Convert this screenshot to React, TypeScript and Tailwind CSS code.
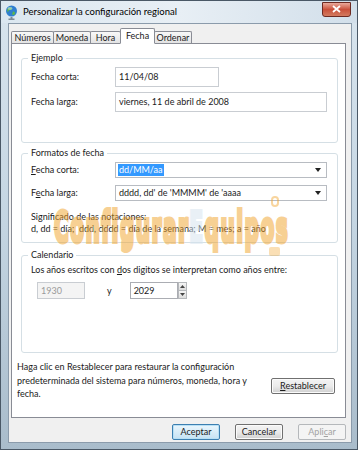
import React from "react";

const font = "font-['Lato',sans-serif]";

const Tab = ({ label, w, active }: { label: string; w: string; active?: boolean }) => (
  <div
    className={`${w} flex items-center justify-center border border-[#898c95] rounded-t-[2px] ${
      active
        ? "h-[16px] -mb-px bg-white border-b-white z-10"
        : "h-[12px] bg-gradient-to-b from-[#f8f8f8] to-[#e3e3e3] border-b-0"
    } -ml-px first:ml-0`}
  >
    {label}
  </div>
);

const Combo = ({ children }: { children: React.ReactNode }) => (
  <div className="w-[212px] h-[16px] border border-[#b8bcc2] bg-white flex items-center pl-[2px] pr-[5px]">
    <div className="flex-1 flex items-center">{children}</div>
    <svg width="6" height="4" viewBox="0 0 6 4">
      <path d="M0 0h6L3 4z" fill="#222" />
    </svg>
  </div>
);

const Btn = ({
  children,
  w = "w-[48px]",
  variant,
}: {
  children: React.ReactNode;
  w?: string;
  variant?: "default" | "disabled";
}) => (
  <div
    className={`${w} h-[16px] rounded-[2px] flex items-center justify-center ${
      variant === "default"
        ? "border border-[#3c7fb1] bg-gradient-to-b from-[#eaf6fd] to-[#c6e2f3] shadow-[0_0_0_1px_#b8e0f5_inset]"
        : variant === "disabled"
        ? "border border-[#b5b8bb] bg-[#f4f4f4] text-[#a3a3a3]"
        : "border border-[#707070] bg-gradient-to-b from-[#f3f3f3] via-[#ebebeb] to-[#cfcfcf] shadow-[0_0_0_1px_#fbfbfb_inset]"
    }`}
  >
    {children}
  </div>
);

const Globe = () => (
  <svg width="13" height="15" viewBox="0 0 13 15">
    <circle cx="6.5" cy="6" r="5.5" fill="#2e7fd0" />
    <path d="M3 3c1.5-1 3-1 4 0 .5 1-1 2-2 2S3 6 3 7.5C2 6.5 2 4 3 3z" fill="#5cb84a" />
    <path d="M8 6.5c1 0 2 .5 2 1.5s-1 2-2 2-1-1.5 0-3.5z" fill="#5cb84a" />
    <ellipse cx="5" cy="3.5" rx="2.5" ry="1.4" fill="#cfe8ff" opacity=".5" />
    <path d="M5.5 12h2v1.5h2V15h-6v-1.5h2z" fill="#7b8a96" />
  </svg>
);

const wmShadow =
  "[text-shadow:2px_0_#fff,-2px_0_#fff,0_2px_#fff,0_-2px_#fff,2px_2px_#fff,-2px_-2px_#fff,2px_-2px_#fff,-2px_2px_#fff]";

export default function App() {
  return (
    <div
      className={`${font} relative w-[358px] h-[450px] overflow-hidden text-[9px] leading-[12px] text-[#1b1b1b] border border-[#4a5866] bg-gradient-to-b from-[#d9e5ee] via-[#c4d5e2] to-[#a9bccb]`}
    >
      {/* title bar */}
      <div className="h-[22px] flex items-center pl-[4px] bg-gradient-to-r from-[#dbe7f0] via-[#e8eff5] to-[#d2dfea]">
        <Globe />
        <span className="ml-[5px] text-[9.5px] text-black">Personalizar la configuración regional</span>
        <div className="ml-auto mr-[6px] -mt-[6px] w-[29px] h-[15px] rounded-b-[3px] border border-[#6d2a22] bg-gradient-to-b from-[#e9a99b] via-[#c9503b] to-[#d27a5f] flex items-center justify-center">
          <svg width="9" height="8" viewBox="0 0 9 8">
            <path d="M1 1l7 6M8 1L1 7" stroke="#fff" strokeWidth="1.8" />
          </svg>
        </div>
      </div>

      {/* client area */}
      <div className="ml-[7px] mr-[5px] h-[420px] border border-[#8b9bab] bg-[#f0f0f0] pt-[3px] pl-[2px] pr-[5px]">
        <div className="flex items-end h-[16px]">
          <Tab label="Números" w="w-[43px]" />
          <Tab label="Moneda" w="w-[38px]" />
          <Tab label="Hora" w="w-[31px]" />
          <Tab label="Fecha" w="w-[35px]" active />
          <Tab label="Ordenar" w="w-[38px]" />
        </div>

        <div className="relative h-[375px] border border-[#898c95] bg-white pt-[8px] pl-[9px] pr-[7px]">
          {/* Ejemplo */}
          <fieldset className="h-[91px] border border-[#d5dfe5] rounded-[3px] pl-[9px]">
            <legend className="ml-[-3px] px-[3px] leading-[12px]">Ejemplo</legend>
            <div className="pt-[3px] flex flex-col gap-[5px]">
              <div className="flex items-center">
                <span className="w-[84px]">Fecha corta:</span>
                <div className="w-[104px] h-[20px] border border-[#c9cdd2] bg-white flex items-center pl-[3px]">11/04/08</div>
              </div>
              <div className="flex items-center">
                <span className="w-[84px]">Fecha larga:</span>
                <div className="w-[212px] h-[20px] border border-[#c9cdd2] bg-white flex items-center pl-[3px]">
                  viernes, 11 de abril de 2008
                </div>
              </div>
            </div>
          </fieldset>

          {/* Formatos de fecha */}
          <fieldset className="mt-[4px] h-[96px] border border-[#d5dfe5] rounded-[3px] pl-[9px]">
            <legend className="ml-[-3px] px-[3px] leading-[12px]">Formatos de fecha</legend>
            <div className="pt-[3px] flex flex-col gap-[7px]">
              <div className="flex items-center">
                <span className="w-[84px]">
                  <u>F</u>echa corta:
                </span>
                <Combo>
                  <span className="bg-[#3399ff] text-white px-[1px] leading-[12px]">dd/MM/aa</span>
                </Combo>
              </div>
              <div className="flex items-center">
                <span className="w-[84px]">
                  F<u>e</u>cha larga:
                </span>
                <Combo>
                  <span className="px-[1px]">dddd, dd' de 'MMMM' de 'aaaa</span>
                </Combo>
              </div>
            </div>
            <div className="mt-[10px]">
              <div>Significado de las notaciones:</div>
              <div className="whitespace-pre">d, dd = día;  ddd, dddd = día de la semana; M = mes; a = año</div>
            </div>
          </fieldset>

          {/* Calendario */}
          <fieldset className="mt-[6px] h-[104px] border border-[#d5dfe5] rounded-[3px] pl-[9px]">
            <legend className="ml-[-3px] px-[3px] leading-[12px]">Calendario</legend>
            <div className="pt-[3px]">
              Los años escritos con <u>d</u>os digitos se interpretan como años entre:
            </div>
            <div className="mt-[6px] flex items-center pl-[6px]">
              <div className="w-[48px] h-[17px] border border-[#c9cdd2] bg-[#f4f4f4] text-[#9a9a9a] flex items-center pl-[3px]">
                1930
              </div>
              <span className="ml-[22px]">y</span>
              <div className="ml-[18px] flex">
                <div className="w-[48px] h-[17px] border border-[#abadb3] bg-white flex items-center pl-[3px]">2029</div>
                <div className="w-[9px] h-[17px] flex flex-col">
                  <div className="flex-1 border border-[#b5b8bb] bg-gradient-to-b from-[#f6f6f6] to-[#dcdcdc] flex items-center justify-center">
                    <svg width="5" height="3" viewBox="0 0 5 3"><path d="M0 3L2.5 0 5 3z" fill="#444" /></svg>
                  </div>
                  <div className="flex-1 border border-t-0 border-[#b5b8bb] bg-gradient-to-b from-[#f6f6f6] to-[#dcdcdc] flex items-center justify-center">
                    <svg width="5" height="3" viewBox="0 0 5 3"><path d="M0 0h5L2.5 3z" fill="#444" /></svg>
                  </div>
                </div>
              </div>
            </div>
          </fieldset>

          {/* Restablecer */}
          <div className="-ml-[4px] mt-[7px] flex">
            <div className="w-[245px] leading-[13.5px]">
              Haga clic en Restablecer para restaurar la configuración predeterminada del sistema para números, moneda, hora y fecha.
            </div>
            <div className="ml-auto mr-[3px] mt-[18px]">
              <Btn w="w-[64px]">
                <span>
                  <u>R</u>establecer
                </span>
              </Btn>
            </div>
          </div>

          {/* watermark */}
          <div
            className={`absolute left-[42px] top-[163px] pointer-events-none opacity-50 whitespace-nowrap font-['DejaVu_Sans',sans-serif] font-bold text-[42px] leading-[42px] tracking-[3px] [transform:scaleX(0.48)] origin-left ${wmShadow}`}
          >
            <span className="text-[#f0a22a] [-webkit-text-stroke:4px_#f0a22a]">Configurar</span>
            <span className="text-[#d4e3ef] [-webkit-text-stroke:4px_#d4e3ef]">E</span>
            <span className="text-[#f0a22a] [-webkit-text-stroke:4px_#f0a22a]">quipos</span>
          </div>
          <div className="absolute left-[259px] top-[152px] w-[8px] h-[11px] rounded-full border-2 border-[#f0a22a] opacity-45" />
          <div className="absolute left-[257px] top-[203px] w-[11px] h-[9px] rounded-[2px] bg-[#f0a22a] opacity-35" />
        </div>

        {/* dialog buttons */}
        <div className="mt-[6px] flex justify-end gap-[15px]">
          <Btn variant="default">Aceptar</Btn>
          <Btn>Cancelar</Btn>
          <Btn variant="disabled">
            <span>
              Apli<u>c</u>ar
            </span>
          </Btn>
        </div>
      </div>
    </div>
  );
}
